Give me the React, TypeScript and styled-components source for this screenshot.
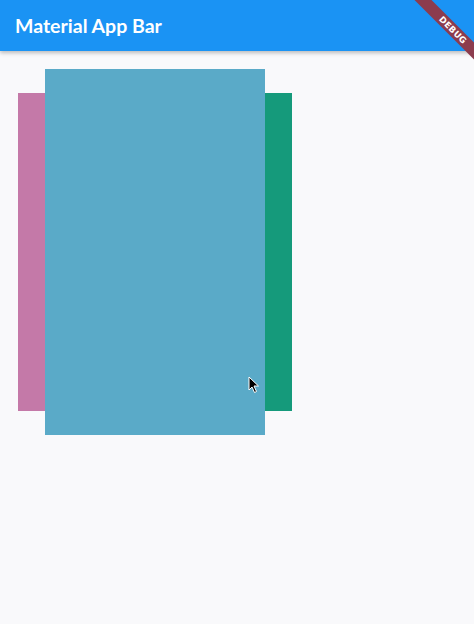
import React from 'react';
import styled, { createGlobalStyle } from 'styled-components';

const GlobalStyle = createGlobalStyle`
  html, body {
    margin: 0;
    padding: 0;
    background: #f9f9fb;
  }
  body {
    font-family: Lato, 'Noto Sans', sans-serif;
  }
`;

const Screen = styled.div`
  position: relative;
  width: 474px;
  height: 624px;
  overflow: hidden;
  background: #f9f9fb;
`;

const AppBar = styled.header`
  display: flex;
  align-items: center;
  height: 51px;
  padding: 0 15px;
  background: #1a93f4;
  box-shadow: 0 2px 4px rgba(0, 0, 0, 0.25);
  position: relative;
  z-index: 1;
`;

const AppTitle = styled.h1`
  margin: 0;
  padding-bottom: 1px;
  font-family: Lato, 'Noto Sans', sans-serif;
  font-size: 19.5px;
  font-weight: 700;
  color: #ffffff;
`;

const Body = styled.main`
  display: flex;
  align-items: center;
  padding: 18px 18px;
`;

const Card = styled.div<{ color: string; w: number; h: number }>`
  flex: none;
  width: ${(p) => p.w}px;
  height: ${(p) => p.h}px;
  background: ${(p) => p.color};
`;

const Banner = styled.div`
  position: absolute;
  top: 24px;
  right: -39px;
  width: 120px;
  height: 12px;
  transform: rotate(45deg);
  background: #8c3c4e;
  color: #ffffff;
  font-family: 'DejaVu Sans', sans-serif;
  font-size: 8.5px;
  font-weight: bold;
  line-height: 12px;
  text-align: center;
  letter-spacing: 0.3px;
  z-index: 2;
`;

const Pointer = styled.svg`
  position: absolute;
  left: 248px;
  top: 376px;
  z-index: 3;
`;

export default function App() {
  return (
    <>
      <GlobalStyle />
      <Screen>
        <AppBar>
          <AppTitle>Material App Bar</AppTitle>
        </AppBar>
        <Body>
          <Card color="#c479a8" w={27} h={318} />
          <Card color="#5aaac8" w={220} h={366} />
          <Card color="#159a7b" w={27} h={318} />
        </Body>
        <Banner>DEBUG</Banner>
        <Pointer width="12" height="18" viewBox="0 0 12 18">
          <path
            d="M1 1 L1 14 L4 11 L6.5 16.5 L8.5 15.5 L6 10 L10.5 10 Z"
            fill="#000"
            stroke="#fff"
            strokeWidth="1"
            strokeLinejoin="round"
          />
        </Pointer>
      </Screen>
    </>
  );
}
